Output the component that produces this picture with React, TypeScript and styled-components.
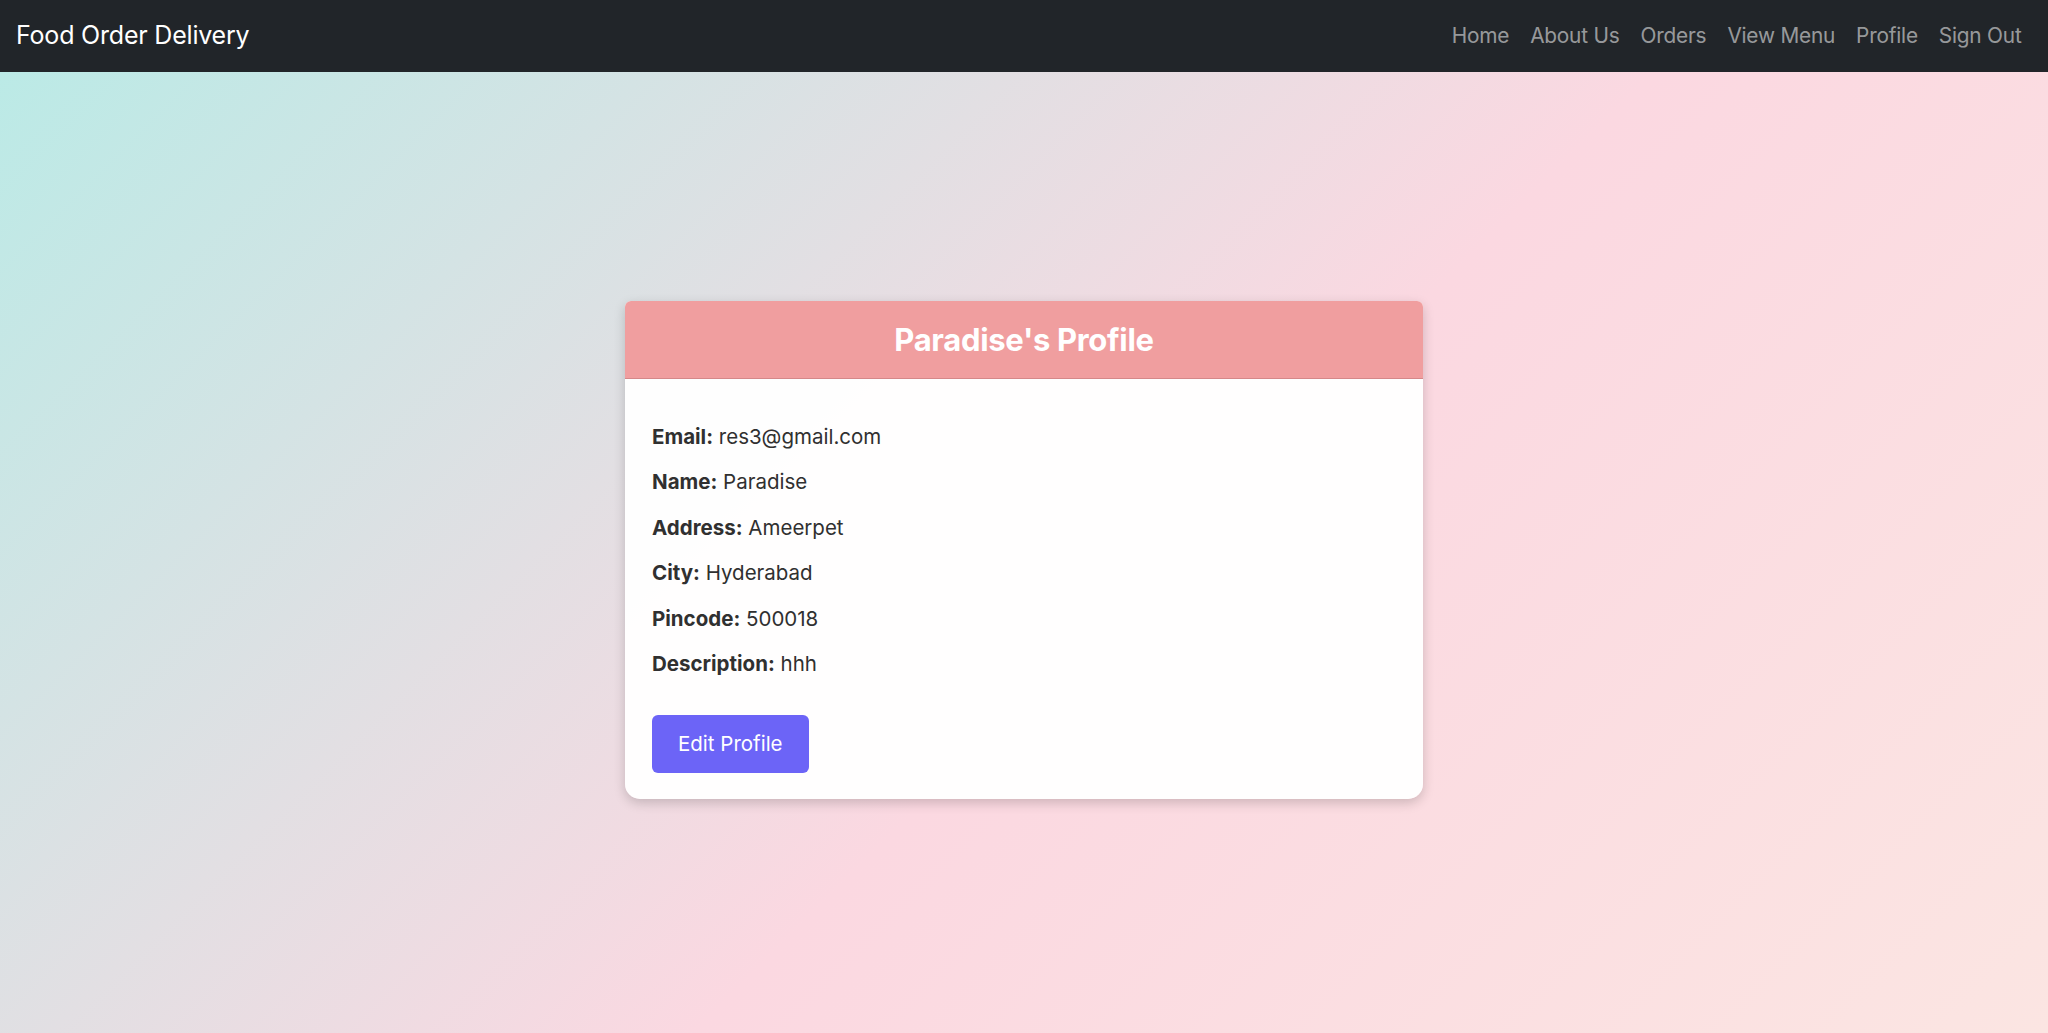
import React from "react";
import styled, { createGlobalStyle } from "styled-components";

const GlobalStyle = createGlobalStyle`
  html, body {
    margin: 0;
    padding: 0;
  }
  body {
    font-family: Inter, "Noto Sans", "Liberation Sans", sans-serif;
    color: #2b2b2b;
  }
  * { box-sizing: border-box; }
`;

const Page = styled.div`
  min-height: 100vh;
  display: flex;
  flex-direction: column;
`;

const NavBar = styled.nav`
  height: 72px;
  background: #212529;
  display: flex;
  align-items: center;
  justify-content: space-between;
  padding: 0 16px 2px 16px;
`;

const Brand = styled.a`
  color: #ffffff;
  font-size: 25px;
  font-weight: 400;
  text-decoration: none;
  letter-spacing: -0.2px;
`;

const NavList = styled.ul`
  display: flex;
  list-style: none;
  margin: 0;
  padding: 0;
`;

const NavLink = styled.a`
  display: block;
  padding: 10px 10.5px;
  color: rgba(255, 255, 255, 0.55);
  font-size: 20.8px;
  text-decoration: none;
  letter-spacing: -0.2px;
`;

const Main = styled.main`
  flex: 1;
  display: flex;
  align-items: center;
  justify-content: center;
  background: linear-gradient(135deg, #bbeae6 0%, #fbd8e1 55%, #fbe5e2 100%);
  padding-bottom: 6px;
`;

const Card = styled.section`
  width: 798px;
  border-radius: 6px 6px 15px 15px;
  overflow: hidden;
  background: rgba(255, 255, 255, 0.96);
  box-shadow: 0 4px 12px rgba(0, 0, 0, 0.18);
`;

const CardHeader = styled.header`
  height: 78px;
  background: #f09e9f;
  border-bottom: 1.5px solid #d58889;
  display: flex;
  align-items: center;
  justify-content: center;
`;

const Title = styled.h3`
  margin: 0;
  color: #ffffff;
  font-size: 31px;
  font-weight: 700;
  letter-spacing: -0.3px;
`;

const CardBody = styled.div`
  padding: 43px 27px 26px 27px;
`;

const Field = styled.p`
  margin: 0 0 15px 0;
  font-size: 20.5px;
  line-height: 30.5px;
  color: #303030;
`;

const Label = styled.strong`
  font-weight: 700;
`;

const EditButton = styled.button`
  margin-top: 20px;
  height: 58px;
  padding: 0 26px;
  border: none;
  border-radius: 6px;
  background: #6c64f7;
  color: #ffffff;
  font-family: inherit;
  font-size: 20.5px;
  cursor: pointer;
`;

const fields: [string, string][] = [
  ["Email", "res3@gmail.com"],
  ["Name", "Paradise"],
  ["Address", "Ameerpet"],
  ["City", "Hyderabad"],
  ["Pincode", "500018"],
  ["Description", "hhh"],
];

const links = ["Home", "About Us", "Orders", "View Menu", "Profile", "Sign Out"];

export default function App() {
  return (
    <Page>
      <GlobalStyle />
      <NavBar>
        <Brand href="#">Food Order Delivery</Brand>
        <NavList>
          {links.map((l) => (
            <li key={l}>
              <NavLink href="#">{l}</NavLink>
            </li>
          ))}
        </NavList>
      </NavBar>
      <Main>
        <Card>
          <CardHeader>
            <Title>Paradise's Profile</Title>
          </CardHeader>
          <CardBody>
            {fields.map(([k, v]) => (
              <Field key={k}>
                <Label>{k}:</Label> {v}
              </Field>
            ))}
            <EditButton>Edit Profile</EditButton>
          </CardBody>
        </Card>
      </Main>
    </Page>
  );
}
